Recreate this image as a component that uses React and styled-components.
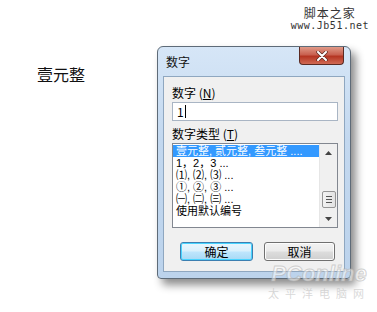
import React from 'react';
import styled, { createGlobalStyle } from 'styled-components';

const GlobalStyle = createGlobalStyle`
  html, body {
    margin: 0;
    padding: 0;
    background: #fff;
  }
  body {
    font-family: "Noto Sans CJK SC", "Liberation Sans", sans-serif;
    font-size: 12px;
    color: #000;
  }
`;

const Page = styled.div`
  position: relative;
  width: 377px;
  height: 312px;
  overflow: hidden;
  background: #fff;
  display: flex;
  align-items: flex-start;
  padding: 46px 0 0 37px;
  box-sizing: border-box;
`;

const Amount = styled.div`
  width: 120px;
  margin-top: 19px;
  font-size: 16px;
  line-height: 18px;
  color: #111;
`;

const Logo = styled.div`
  position: absolute;
  top: 5px;
  right: 8px;
  display: flex;
  flex-direction: column;
  align-items: center;
  color: #333;
  line-height: 12px;
`;

const LogoCn = styled.span`
  font-size: 12px;
  letter-spacing: 1px;
  line-height: 15px;
`;

const LogoUrl = styled.span`
  font-family: "DejaVu Sans Mono", monospace;
  font-size: 10px;
  letter-spacing: 0.5px;
`;

const Window = styled.div`
  position: relative;
  width: 194px;
  height: 233px;
  box-sizing: border-box;
  border: 1px solid #5e6b78;
  border-radius: 6px 6px 4px 4px;
  background: linear-gradient(180deg, #d6e6f7 0%, #c3d8ef 40%, #bcd3ec 100%);
  box-shadow: 5px 6px 9px rgba(0, 0, 0, 0.45);
  display: flex;
  flex-direction: column;
  padding: 0 5px 6px 5px;
`;

const TitleBar = styled.div`
  height: 29px;
  display: flex;
  align-items: flex-start;
  justify-content: space-between;
`;

const Title = styled.span`
  margin: 8px 0 0 3px;
  font-size: 12px;
  line-height: 14px;
  color: #111;
`;

const CloseButton = styled.div`
  width: 45px;
  height: 18px;
  margin-right: 1px;
  box-sizing: border-box;
  border: 1px solid #5b2a22;
  border-top: none;
  border-radius: 0 0 4px 4px;
  background: linear-gradient(180deg, #e09a88 0%, #c9604f 45%, #b53522 55%, #d06a54 100%);
  display: flex;
  align-items: center;
  justify-content: center;
`;

const Client = styled.div`
  flex: 1;
  box-sizing: border-box;
  border: 1px solid #8fa7c0;
  background: #f0f0f0;
  padding: 9px 8px 0 8px;
  display: flex;
  flex-direction: column;
`;

const Label = styled.div`
  font-size: 12px;
  line-height: 14px;
  height: 14px;
  margin-bottom: ${(p) => p.gap || 1}px;

  u {
    text-decoration: underline;
    text-underline-offset: 1px;
  }
`;

const Input = styled.div`
  height: 19px;
  width: 166px;
  box-sizing: border-box;
  border: 1px solid #a9b5c4;
  background: #fff;
  padding: 2px 4px;
  font-size: 12px;
  line-height: 14px;
  display: flex;
  align-items: center;
  margin-bottom: 6px;
`;

const Caret = styled.span`
  display: inline-block;
  width: 1px;
  height: 13px;
  background: #000;
  margin-left: 1px;
`;

const ListBox = styled.div`
  width: 166px;
  height: 85px;
  box-sizing: border-box;
  border: 1px solid #828790;
  background: #fff;
  display: flex;
  margin-top: 1px;
`;

const Items = styled.div`
  flex: 1;
  padding-top: 1px;
`;

const Item = styled.div`
  height: 12px;
  line-height: 12px;
  font-family: "Liberation Sans", "Noto Sans CJK SC", sans-serif;
  font-size: 11px;
  padding-left: 3px;
  white-space: nowrap;
  background: ${(p) => (p.selected ? '#3399ff' : 'transparent')};
  color: ${(p) => (p.selected ? '#fff' : '#000')};
`;

const ScrollBar = styled.div`
  width: 17px;
  background: #f0f0f0;
  border-left: 1px solid #e6e6e6;
  display: flex;
  flex-direction: column;
  align-items: center;
  justify-content: space-between;
`;

const Arrow = styled.div`
  height: 17px;
  display: flex;
  align-items: center;
  justify-content: center;
`;

const Thumb = styled.div`
  width: 14px;
  height: 17px;
  box-sizing: border-box;
  border: 1px solid #959595;
  border-radius: 2px;
  background: linear-gradient(90deg, #f2f2f2, #e3e3e3);
  display: flex;
  flex-direction: column;
  align-items: center;
  justify-content: center;
  gap: 2px;
  margin-top: 30px;
`;

const Grip = styled.span`
  width: 6px;
  height: 1px;
  background: #555;
`;

const Spacer = styled.div`
  flex: 1;
`;

const Buttons = styled.div`
  display: flex;
  gap: 11px;
  padding: 0 0 10px 8px;
`;

const Button = styled.div`
  width: ${(p) => p.w}px;
  height: 19px;
  box-sizing: border-box;
  border: 1px solid ${(p) => (p.primary ? '#3c7fb1' : '#707070')};
  border-radius: 3px;
  background: ${(p) =>
    p.primary
      ? 'linear-gradient(180deg, #eaf6fd 0%, #d9f0fc 48%, #bee6fd 52%, #a7d9f5 100%)'
      : 'linear-gradient(180deg, #f2f2f2 0%, #ebebeb 48%, #dddddd 52%, #cfcfcf 100%)'};
  box-shadow: ${(p) => (p.primary ? 'inset 0 0 0 1px #48d4ff' : 'inset 0 0 0 1px #fcfcfc')};
  display: flex;
  align-items: center;
  justify-content: center;
  font-size: 12px;
  line-height: 14px;
`;

const Watermark = styled.div`
  position: absolute;
  left: 268px;
  top: 261px;
  display: flex;
  flex-direction: column;
  align-items: center;
  pointer-events: none;
`;

const WmBig = styled.span`
  font-family: "Liberation Sans", sans-serif;
  font-size: 22px;
  font-weight: bold;
  font-style: italic;
  line-height: 26px;
  color: rgba(255, 255, 255, 0.5);
  -webkit-text-stroke: 1px rgba(180, 180, 180, 0.6);
`;

const WmSmall = styled.span`
  font-family: "Liberation Sans", "Noto Sans CJK SC", sans-serif;
  font-size: 11px;
  letter-spacing: 6px;
  line-height: 14px;
  color: rgba(190, 190, 190, 0.6);
`;

const options = [
  { text: '壹元整, 贰元整, 叁元整 ....', selected: true },
  { text: ' 1，2，3 ...' },
  { text: '⑴, ⑵, ⑶ ...' },
  { text: '①, ②, ③ ...' },
  { text: '㈠, ㈡, ㈢ ...' },
  { text: '使用默认编号' },
];

export default function App() {
  return (
    <>
      <GlobalStyle />
      <Page>
        <Amount>壹元整</Amount>
        <Window>
          <TitleBar>
            <Title>数字</Title>
            <CloseButton>
              <svg width="12" height="10" viewBox="0 0 12 10">
                <path d="M2 1 L10 9 M10 1 L2 9" stroke="#5a2a20" strokeWidth="3.4" strokeLinecap="round" />
                <path d="M2 1 L10 9 M10 1 L2 9" stroke="#fff" strokeWidth="2" strokeLinecap="round" />
              </svg>
            </CloseButton>
          </TitleBar>
          <Client>
            <Label gap={2}>数字 (<u>N</u>)</Label>
            <Input>
              1<Caret />
            </Input>
            <Label>数字类型 (<u>T</u>)</Label>
            <ListBox>
              <Items>
                {options.map((o) => (
                  <Item key={o.text} selected={o.selected}>
                    {o.text}
                  </Item>
                ))}
              </Items>
              <ScrollBar>
                <Arrow>
                  <svg width="7" height="4" viewBox="0 0 7 4">
                    <path d="M0 4 L3.5 0 L7 4 Z" fill="#444" />
                  </svg>
                </Arrow>
                <Thumb>
                  <Grip />
                  <Grip />
                  <Grip />
                </Thumb>
                <Spacer />
                <Arrow>
                  <svg width="7" height="4" viewBox="0 0 7 4">
                    <path d="M0 0 L7 0 L3.5 4 Z" fill="#444" />
                  </svg>
                </Arrow>
              </ScrollBar>
            </ListBox>
            <Spacer />
            <Buttons>
              <Button primary w={73}>确定</Button>
              <Button w={71}>取消</Button>
            </Buttons>
          </Client>
        </Window>
        <Logo>
          <LogoCn>脚本之家</LogoCn>
          <LogoUrl>www.Jb51.net</LogoUrl>
        </Logo>
        <Watermark>
          <WmBig>PConline</WmBig>
          <WmSmall>太平洋电脑网</WmSmall>
        </Watermark>
      </Page>
    </>
  );
}
